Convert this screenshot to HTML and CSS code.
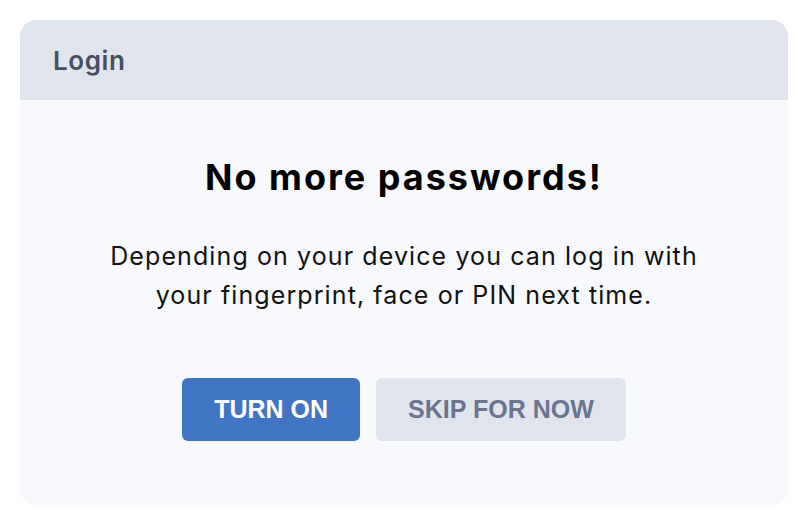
FILE: index.html
```html
<!DOCTYPE html>
<html lang="en">
<head>
    <meta charset="UTF-8">
    <meta name="viewport" content="width=device-width, initial-scale=1.0">
    <title>Login</title>
    <link rel="stylesheet" href="styles.css">
</head>
<body>
    <div class="card">
        <div class="card-header">Login</div>
        <div class="card-body">
            <h1 class="title">No more passwords!</h1>
            <p class="text">Depending on your device you can log in with<br>your fingerprint, face or PIN next time.</p>
            <div class="actions">
                <button class="btn btn-primary">TURN ON</button>
                <button class="btn btn-secondary">SKIP FOR NOW</button>
            </div>
        </div>
    </div>
</body>
</html>
```

FILE: styles.css
```css
body{
    margin: 0;
    padding: 20px 22px 25px 20px;
    background-color: #ffffff;
    font-family: Inter, "Noto Sans", sans-serif;
}
.card{
    border-radius: 16px;
    overflow: hidden;
    background-color: #f7f9fc;
}
.card-header{
    height: 80px;
    display: flex;
    align-items: center;
    padding: 0 33px;
    background-color: #e0e5ed;
    color: #464e62;
    font-size: 26px;
    font-weight: 600;
    letter-spacing: 0.6px;
}
.card-body{
    padding: 57px 32px 64px;
    text-align: center;
}
.title{
    margin: 0;
    font-size: 36px;
    line-height: 40px;
    font-weight: 700;
    color: #000000;
    letter-spacing: 2px;
}
.text{
    margin: 40px 0 0;
    font-size: 25px;
    line-height: 39px;
    color: #111111;
    letter-spacing: 1.1px;
}
.actions{
    display: flex;
    justify-content: center;
    gap: 16px;
    margin-top: 63px;
}
.btn{
    height: 63px;
    padding: 0 32px;
    border: none;
    border-radius: 6px;
    font-family: "Liberation Sans", Arial, sans-serif;
    font-size: 25px;
    font-weight: 700;
    cursor: pointer;
}
.btn-primary{
    background-color: #4274c4;
    color: #ffffff;
}
.btn-secondary{
    background-color: #e0e5ed;
    color: #6b7590;
}
```
